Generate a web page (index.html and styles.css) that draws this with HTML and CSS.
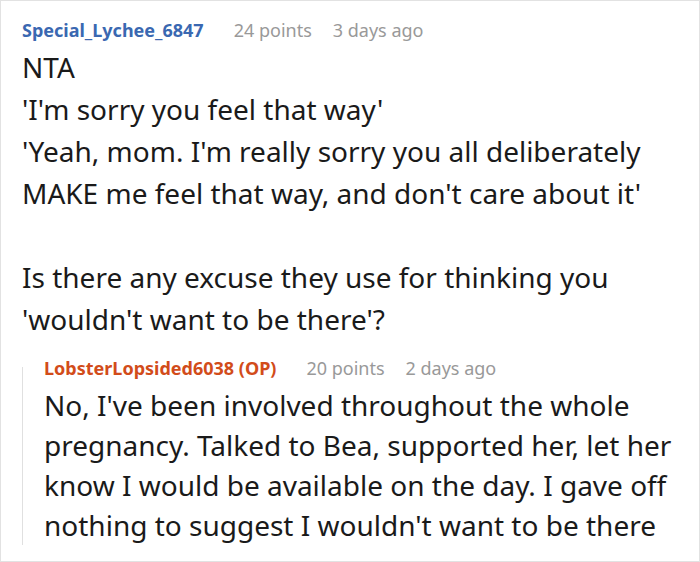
FILE: index.html
```html
<!DOCTYPE html>
<html lang="en">
<head>
<meta charset="utf-8">
<title>Comments</title>
<link rel="stylesheet" href="styles.css">
</head>
<body>
<div class="thread">
  <div class="comment">
    <div class="meta">
      <span class="author">Special_Lychee_6847</span>
      <span class="points">24 points</span>
      <span class="time">3 days ago</span>
    </div>
    <div class="body">
      <p>NTA<br>'I'm sorry you feel that way'<br>'Yeah, mom. I'm really sorry you all deliberately MAKE me feel that way, and don't care about it'</p>
      <p>Is there any excuse they use for thinking you 'wouldn't want to be there'?</p>
    </div>
    <div class="reply">
      <div class="meta">
        <span class="author op">LobsterLopsided6038 (OP)</span>
        <span class="points">20 points</span>
        <span class="time">2 days ago</span>
      </div>
      <div class="body">
        <p>No, I've been involved throughout the whole pregnancy. Talked to Bea, supported her, let her know I would be available on the day. I gave off nothing to suggest I wouldn't want to be there</p>
      </div>
    </div>
  </div>
</div>
</body>
</html>
```

FILE: styles.css
```css
html, body {
  margin: 0;
  padding: 0;
  background: #ffffff;
}

.thread {
  box-sizing: border-box;
  width: 700px;
  height: 562px;
  border: 1px solid #e2e2e2;
  overflow: hidden;
  font-family: "Noto Sans", "Open Sans", sans-serif;
  color: #1a1a1a;
}

.comment {
  padding: 17px 14px 0 21px;
}

.meta {
  display: flex;
  align-items: baseline;
  font-size: 18px;
  line-height: 24px;
  white-space: nowrap;
}

.author {
  font-weight: 700;
  color: #3a68b1;
}

.author.op {
  color: #d24c1a;
}

.points {
  margin-left: 30px;
  color: #999999;
}

.time {
  margin-left: 21px;
  color: #999999;
}

.body {
  margin-top: 4px;
  font-size: 28px;
  line-height: 42px;
}

.body p {
  margin: 0;
}

.body p + p {
  margin-top: 42px;
}

.reply {
  position: relative;
  margin-top: 16px;
  padding-left: 22px;
}

.reply .body {
  margin-top: 5px;
  line-height: 40px;
}

.reply::before {
  content: "";
  position: absolute;
  left: 0;
  top: 11px;
  bottom: 0;
  width: 1px;
  background: #e0e0e0;
}
```
